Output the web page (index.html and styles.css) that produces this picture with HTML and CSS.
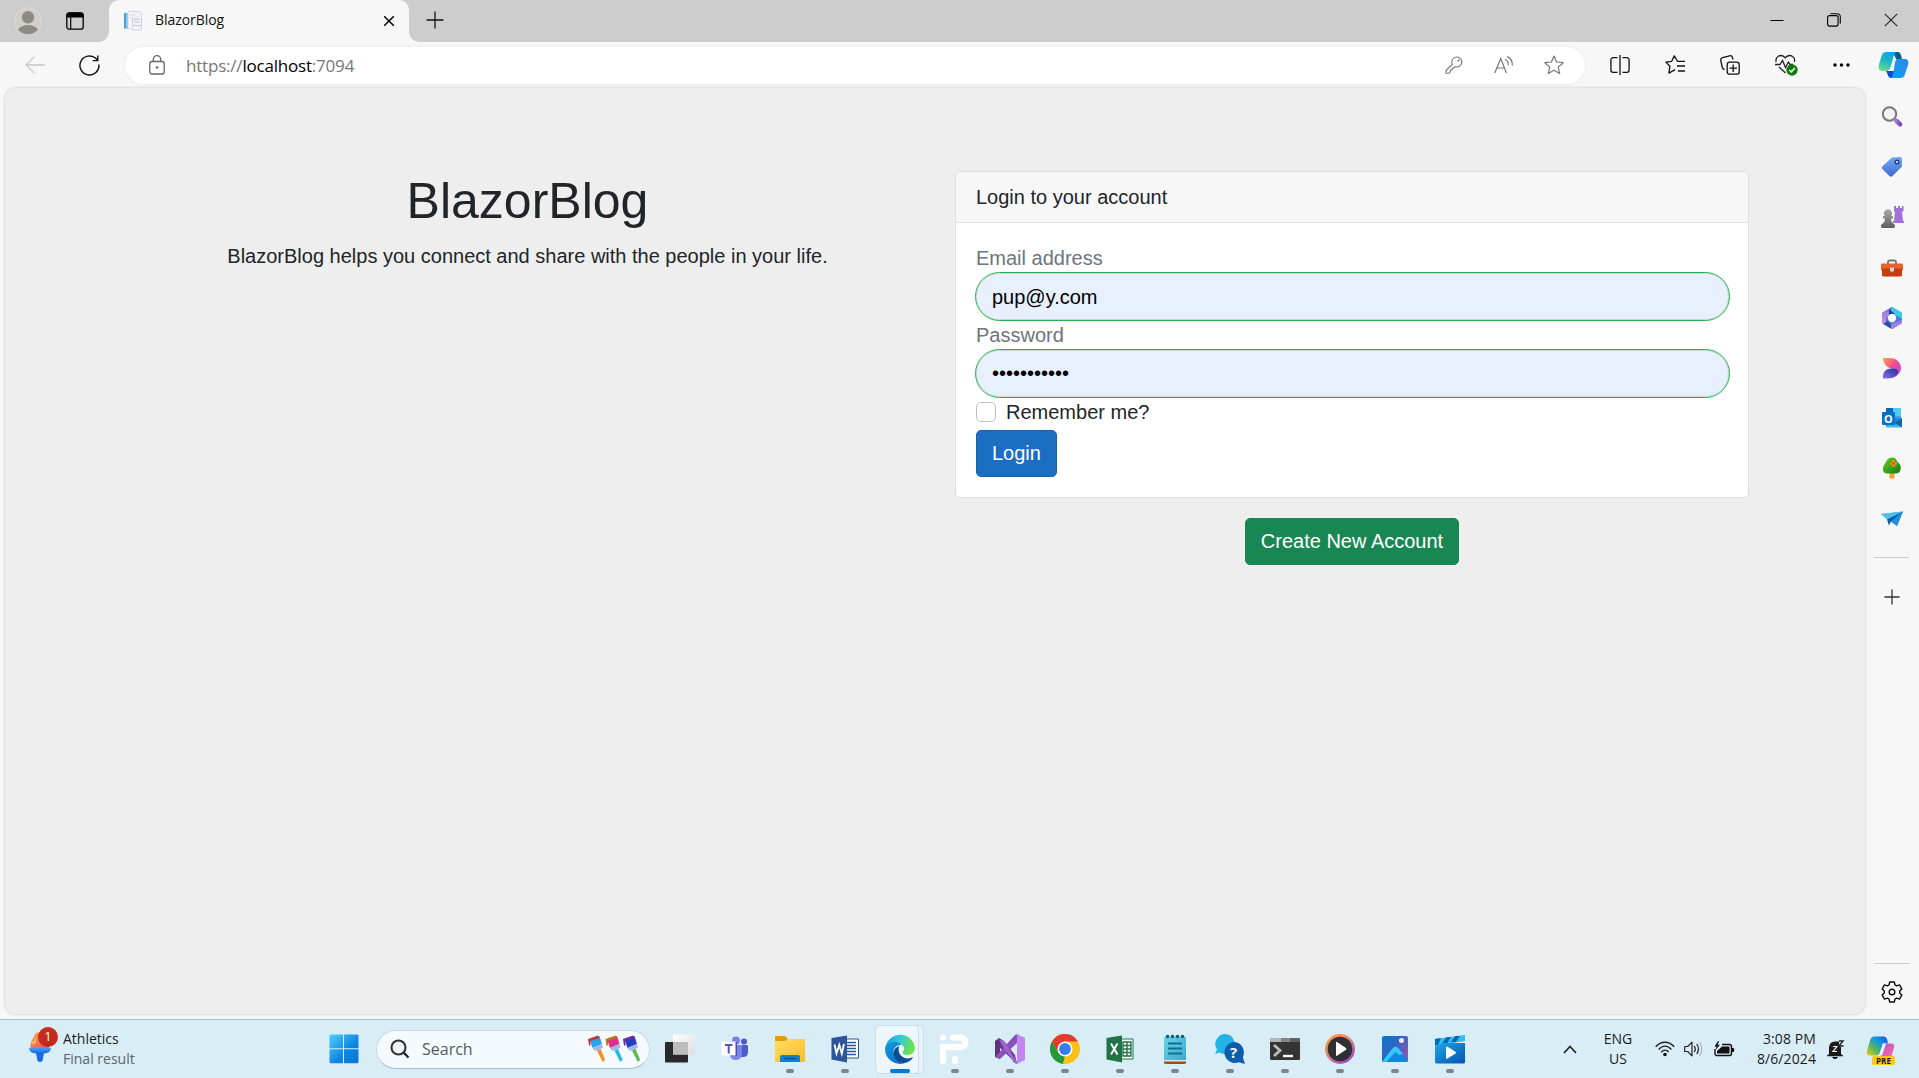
FILE: index.html
```html
<!DOCTYPE html>
<html lang="en">
<head>
<meta charset="utf-8">
<title>BlazorBlog</title>
<link rel="stylesheet" href="styles.css">
</head>
<body>
<div class="screen">
  <header class="tabstrip">
    <div class="tabstrip-left">
      <svg class="avatar" width="28" height="28" viewBox="0 0 28 28"><circle cx="14" cy="14" r="13.3" fill="#d2cfca" stroke="#dedbd7"/><circle cx="14" cy="10.300" r="6.200" fill="#8d8985"/><path d="M4 22.500C6 19.500 10 18 14 18s8 1.500 10 4.500A13 13 0 0 1 4 22.500z" fill="#8d8985"/></svg>
      <svg width="18" height="18" viewBox="0 0 18 18"><rect x=".8" y=".8" width="16.400" height="16.400" rx="2.500" fill="none" stroke="#000" stroke-width="1.300"/><path d="M.5 5.500V3A2.500 2.500 0 0 1 3 .5h12A2.500 2.500 0 0 1 17.500 3v2.500z"/><path d="M4.700 5v12.500" stroke="#000" stroke-width="1.200"/></svg>
    </div>
    <div class="tab">
      <svg width="20" height="20" viewBox="0 0 20 20"><path d="M5 .5h12l1.500 1.500v16H5z" fill="#f4f5f8" stroke="#d5d9df"/><path d="M1 2h3.800v15.500H1z" fill="#4a9fd4"/><path d="M3.300 2h1.500v15.500H3.300z" fill="#a9d4ee"/><path d="M7 4h5M7 7h9" stroke="#d3d8e0"/><path d="M9.500 8.500h9v10.500h-9z" fill="#f1f3f8" stroke="#cfd5df"/><path d="M11 11h6M10 14.500h9" stroke="#c0c8d5"/></svg>
      <span class="tab-title">BlazorBlog</span>
      <svg class="tab-close" width="12" height="12" viewBox="0 0 12 12"><path d="M1.200 1.200l9.600 9.600M10.800 1.200L1.200 10.800" stroke="#000" stroke-width="1.500"/></svg>
    </div>
    <svg class="newtab" width="18" height="18" viewBox="0 0 18 18"><path d="M9 .5v17M.5 9h17" stroke="#111" stroke-width="1.300"/></svg>
    <div class="window-controls">
      <svg width="14" height="14" viewBox="0 0 14 14"><path d="M.5 7.500h13" stroke="#000"/></svg>
      <svg width="14" height="14" viewBox="0 0 14 14"><rect x=".6" y="2.600" width="10.500" height="10.500" rx="2" fill="none" stroke="#000" stroke-width="1.100"/><path d="M3.500.7h6.500a3.300 3.300 0 0 1 3.300 3.300v6.500" fill="none" stroke="#000" stroke-width="1.100"/></svg>
      <svg width="14" height="14" viewBox="0 0 14 14"><path d="M.8.8l12.400 12.400M13.200.8L.8 13.200" stroke="#222" stroke-width="1.100"/></svg>
    </div>
  </header>

  <div class="toolbar">
    <svg class="back" width="20" height="18" viewBox="0 0 20 18"><path d="M20 9H1M9.500.6L1 9l8.500 8.400" fill="none" stroke="#c8c8c8" stroke-width="1.300"/></svg>
    <svg class="reload" width="21" height="21" viewBox="0 0 21 21"><path d="M19.900 9.500A9.500 9.500 0 1 1 17 3.600l1.800 1.900M18.800.6v5h-5.200" fill="none" stroke="#111" stroke-width="1.400"/></svg>
    <div class="address">
      <svg width="16" height="20" viewBox="0 0 16 20"><rect x=".8" y="6.500" width="14.400" height="12.500" rx="2.200" fill="none" stroke="#666" stroke-width="1.300"/><path d="M4.300 6.500V4.300a3.700 3.700 0 0 1 7.400 0v2.200" fill="none" stroke="#666" stroke-width="1.300"/><circle cx="8" cy="12.500" r="1.300" fill="#666"/></svg>
      <span class="url">https://<b>localhost</b>:7094</span>
      <div class="address-actions">
        <svg width="18" height="18" viewBox="0 0 18 18"><path d="M7.300 8.300A5 5 0 0 1 12 1a5 5 0 1 1-1.900 9.700L9 12H7.200v2H5.200v2L4 17.200H1v-2.700z" fill="none" stroke="#777" stroke-width="1.100" stroke-linejoin="round"/><circle cx="13.500" cy="4.500" r="1" fill="#777"/></svg>
        <svg width="20" height="18" viewBox="0 0 20 18"><path d="M.7 17L6.700 2.500 12.500 17M2.800 12h7.800" fill="none" stroke="#777" stroke-width="1.200"/><path d="M11 3.200c2.400 1 3.400 3.200 3.300 6M13 .6c3.700 1.500 5.600 5 5.300 9" fill="none" stroke="#777" stroke-width="1.200"/></svg>
        <svg width="20" height="20" viewBox="0 0 20 20"><path d="M10 1l2.600 6 6.600.7-5 4.400 1.500 6.500L10 15.200l-5.700 3.400 1.500-6.500-5-4.400L7.400 7z" fill="none" stroke="#777" stroke-width="1.200" stroke-linejoin="round"/></svg>
      </div>
    </div>
    <div class="toolbar-actions">
      <svg width="20" height="20" viewBox="0 0 20 20"><path d="M10 0v20M7.500 2.700H3.200A2.300 2.300 0 0 0 .9 5v10a2.300 2.300 0 0 0 2.300 2.300h4.300M12.500 2.700h4.300A2.300 2.300 0 0 1 19.100 5v10a2.300 2.300 0 0 1-2.300 2.300h-4.300" fill="none" stroke="#111" stroke-width="1.300"/></svg>
      <svg width="20" height="20" viewBox="0 0 20 20"><path d="M11.500 4.500L9.300.9 6.700 6.300l-5.800.8 4 4.200-1 6.800 6.300-3.500M11.500 4.500l1 1.800H20M12 11h8M13 16h7" fill="none" stroke="#111" stroke-width="1.300" stroke-linejoin="round"/></svg>
      <svg width="20" height="20" viewBox="0 0 20 20"><rect x="7.200" y="7.200" width="12" height="12" rx="2.500" fill="none" stroke="#111" stroke-width="1.300"/><path d="M13.200 9.500v7.500M9.500 13.200h7.500M4.500 14.500c-1.600-.2-1.900-1-2.200-2L.8 5.500C.5 4 1.200 3 2.500 2.600L9.500.8c1.600-.4 2.500.2 2.900 1.500l.6 2.200" fill="none" stroke="#111" stroke-width="1.300"/></svg>
      <svg width="23" height="22" viewBox="0 0 23 22"><path d="M1.200 8C-.2 3.500 5.200-1.300 10.200 3.800 15.500-1.300 20.800 3.500 19.300 8M0 10.500h5l2.500-4 3 7 3-5.500 1.500 2.500h3M4 13l6.500 6" fill="none" stroke="#222" stroke-width="1.300"/><circle cx="17" cy="16" r="5.700" fill="#107c10"/><path d="M14.500 16l1.800 1.900 3.500-3.800" fill="none" stroke="#fff" stroke-width="1.500"/></svg>
      <svg width="18" height="20" viewBox="0 0 18 20"><circle cx="2" cy="10" r="1.700"/><circle cx="8.500" cy="10" r="1.700"/><circle cx="15" cy="10" r="1.700"/></svg>
    </div>
    <svg class="copilot" width="31" height="28" viewBox="0 0 31 28"><defs><linearGradient id="cpA" x1=".5" y1="0" x2=".1" y2="1"><stop offset="0" stop-color="#0aa5e8"/><stop offset=".45" stop-color="#20b9c1"/><stop offset="1" stop-color="#72e08a"/></linearGradient><linearGradient id="cpB" x1="1" y1="0" x2="0" y2="1"><stop offset="0" stop-color="#2e86e8"/><stop offset="1" stop-color="#0aa4f8"/></linearGradient></defs><path d="M15 1h5c2.500 0 3 3 4 7h-6z" fill="#155a86"/><path d="M8 20h9l-2 7h-2c-3 0-3-4-5-7z" fill="#1448d6"/><path d="M9 1h9c-4 3-3.500 18-9 19H4c-3 0-4-3-3-7L4 4c.7-2 2-3 5-3z" fill="url(#cpA)"/><path d="M19 8h8c3 0 4 2.500 3 6l-3 9c-.8 3-2 4-5 4h-9c4-2 2.500-18 6-19z" fill="url(#cpB)"/></svg>
  </div>

  <div class="workspace">
    <main class="page">
      <div class="page-grid">
        <section class="intro">
          <h1>BlazorBlog</h1>
          <p>BlazorBlog helps you connect and share with the people in your life.</p>
        </section>
        <section class="account">
          <form class="card">
            <div class="card-header">Login to your account</div>
            <div class="card-body">
              <label class="field-label" for="email">Email address</label>
              <input class="field field-email" id="email" type="text" value="pup@y.com">
              <label class="field-label" for="password">Password</label>
              <input class="field" id="password" type="password" value="puppypuppy1">
              <label class="remember"><input class="check" type="checkbox"><span>Remember me?</span></label>
              <button class="btn btn-primary" type="button">Login</button>
            </div>
          </form>
          <button class="btn btn-success" type="button">Create New Account</button>
        </section>
      </div>
    </main>
    <aside class="sidebar">
      <div class="side-item"><svg width="22" height="22" viewBox="0 0 22 22"><defs><linearGradient id="mg" x1="0" x2="1"><stop offset="0" stop-color="#a274d8"/><stop offset="1" stop-color="#7c45bd"/></linearGradient></defs><circle cx="8.500" cy="8" r="6.700" fill="#f3f3f5" stroke="#777" stroke-width="2"/><path d="M13 12.500l3 3" stroke="#888" stroke-width="2"/><path d="M15.500 15l3.500 3.300" stroke="url(#mg)" stroke-width="4.500" stroke-linecap="round"/></svg></div>
      <div class="side-item"><svg width="22" height="22" viewBox="0 0 22 22"><defs><linearGradient id="tg" x1="0" y1="0" x2="0" y2="1"><stop offset="0" stop-color="#76a7f0"/><stop offset="1" stop-color="#3a6cd0"/></linearGradient></defs><path d="M11 1.500L19 1q2 0 2 2v7.500L11.500 20q-1.500 1.500-3 0l-7-6.700q-1.500-1.500 0-3z" fill="url(#tg)"/><circle cx="16" cy="6" r="1.800" fill="#eef" stroke="#1d3f8f" stroke-width="1.500"/></svg></div>
      <div class="side-item"><svg width="24" height="24" viewBox="0 0 24 24"><defs><linearGradient id="pw" x1="0" y1="0" x2="0" y2="1"><stop offset="0" stop-color="#aaa"/><stop offset="1" stop-color="#5f5f5f"/></linearGradient></defs><path d="M14 1h2v2h2V1h2v2h2V1h1.500v5l-1.500 1 1 9h1v2H13v-2h1l1-9-1-1z" fill="#a36fda"/><path d="M5 11a4 4 0 1 1 6 0h2v2.500h-2c.2 3 1 4 3 5.500 1.500 1 1.500 4-.5 4H2.500c-2 0-2-3-.5-4 2-1.500 3-2.500 3-5.500H3V11z" fill="url(#pw)"/></svg></div>
      <div class="side-item"><svg width="22" height="18" viewBox="0 0 22 18"><path d="M7 5V3q0-1.500 1.500-1.500h5Q15 1.500 15 3v2" fill="none" stroke="#777" stroke-width="1.800"/><rect y="4.500" width="22" height="7" rx="1" fill="#e8602c"/><path d="M1 9.500h20V16q0 1.500-1.500 1.500h-17Q1 17.500 1 16z" fill="#c93d0d"/><path d="M9 8.500h4v3l-2 2-2-2z" fill="#ccd3d8"/></svg></div>
      <div class="side-item"><svg width="22" height="22" viewBox="0 0 22 22"><defs><linearGradient id="m3" x1="0" y1="0" x2="0" y2="1"><stop offset="0" stop-color="#8b73d6"/><stop offset="1" stop-color="#d88cf0"/></linearGradient></defs><path d="M10 .5q1-.6 2 0l8 4.700q1 .6 1 1.800v8q0 1.200-1 1.800l-8 4.700q-1 .6-2 0l-8-4.700q-1-.6-1-1.800V7q0-1.200 1-1.800z" fill="#4a7bd0"/><path d="M11 .2q.6 0 1 .3l8 4.700q1 .6 1 1.800v5L14 8H8z" fill="#3bc6ee"/><path d="M11 .2L8 2v6l-3 3v6L2 16.800q-1-.6-1-1.800V7q0-1.200 1-1.800l8-4.700z" fill="url(#m3)"/><path d="M8 2v6l6-1z" fill="#1d3f86"/><path d="M21 13v2q0 1.200-1 1.800l-8 4.700q-1 .6-2 0l-3-2 7-4z" fill="#a57be8"/><path d="M2 16.800l8 4.700V18l-3-4z" fill="#2352a5"/><circle cx="11" cy="11" r="4.200" fill="#f7f7f7"/></svg></div>
      <div class="side-item"><svg width="20" height="22" viewBox="0 0 20 22"><defs><linearGradient id="dsA" x1="0" y1="0" x2="1" y2=".8"><stop offset="0" stop-color="#ffa34b"/><stop offset=".5" stop-color="#f2508b"/><stop offset="1" stop-color="#ba44ec"/></linearGradient><linearGradient id="dsB" x1="1" y1="0" x2="0" y2="1"><stop offset="0" stop-color="#23308d"/><stop offset="1" stop-color="#8670ff"/></linearGradient></defs><path d="M1 1h6c8 0 12 5 12 10 0 4-3 8-8 9.500L12 12C5 11 1 7 1 1z" fill="url(#dsA)"/><path d="M1 21.500V20c0-5 3-8.500 8-8.500 5 0 8 1 7 4-1.500 5-7 6-12 6z" fill="url(#dsB)"/></svg></div>
      <div class="side-item"><svg width="22" height="22" viewBox="0 0 22 22"><path d="M5 1h15v19H5z" fill="#38a9e6"/><path d="M12 1h8v8h-8z" fill="#53c9f3"/><path d="M5 1h7v5H5z" fill="#0d68b8"/><path d="M5 11h15v9H5z" fill="#198bd9"/><path d="M21 11v9H8z" fill="#17679f"/><path d="M5 11l16 9.500H6z" fill="#35b9ef"/><rect x="1" y="5" width="13" height="13" rx="1" fill="#0870ca"/><text class="outlook-letter" x="7.500" y="15.500" text-anchor="middle">O</text></svg></div>
      <div class="side-item"><svg width="20" height="22" viewBox="0 0 20 22"><defs><linearGradient id="tr" x1="0" y1="0" x2="1" y2="1"><stop offset="0" stop-color="#6ad219"/><stop offset="1" stop-color="#11771d"/></linearGradient></defs><path d="M7.500 15h5v6q-2.500 1.500-5 0z" fill="#f0a52a"/><path d="M10 .5c3 0 4.500 1.500 5 4 3 2 4.500 5 3.500 8-.7 2.500-2 4-5 4H5.500C2 16.500.5 14 1 11c.3-3 2-4 3-6 1-3 3-4.500 6-4.500z" fill="url(#tr)"/><circle cx="11.500" cy="4.500" r="1.600" fill="#f28a10"/><circle cx="9.500" cy="6.500" r="1.600" fill="#f28a10"/><circle cx="13.500" cy="6.500" r="1.600" fill="#f28a10"/><circle cx="11.500" cy="8.500" r="1.600" fill="#f28a10"/><circle cx="11.500" cy="6.500" r="1.100" fill="#c8430c"/></svg></div>
      <div class="side-item"><svg width="22" height="18" viewBox="0 0 22 18"><path d="M0 4l22-2.500L16 16z" fill="#20aae9"/><path d="M0 4l22-2.500L7 10z" fill="#4dc0f2"/><path d="M6 9.500l16-8-12 10-2 4z" fill="#0b5d9d"/><path d="M10 11.500L22 1.500 16 16z" fill="#218fdd"/></svg></div>
      <div class="side-rule side-rule-top"></div>
      <svg class="side-plus" width="16" height="16" viewBox="0 0 16 16"><path d="M8 .5v15M.5 8h15" stroke="#333" stroke-width="1.300"/></svg>
      <div class="side-rule side-rule-bottom"></div>
      <svg class="side-gear" width="22" height="22" viewBox="0 0 22 22"><path d="M8.700 1h4.600l.7 2.900 1.600.9 2.900-.9 2.300 4L18.700 10v2l2.100 2.100-2.300 4-2.900-.9-1.600.9-.7 2.900H8.700L8 18.100l-1.600-.9-2.900.9-2.300-4L3.300 12v-2L1.200 7.900l2.300-4 2.900.9L8 3.900z" fill="none" stroke="#111" stroke-width="1.400" stroke-linejoin="round"/><circle cx="11" cy="11" r="2.800" fill="none" stroke="#111" stroke-width="1.400"/></svg>
    </aside>
  </div>

  <footer class="taskbar">
    <div class="widget">
      <div class="widget-icon">
        <svg width="24" height="32" viewBox="0 0 24 32"><defs><linearGradient id="fl" x1="0" y1="0" x2="1" y2="1"><stop offset="0" stop-color="#ffad2e"/><stop offset="1" stop-color="#f03e74"/></linearGradient><linearGradient id="torch" x1="0" y1="0" x2="0" y2="1"><stop offset="0" stop-color="#48a8fb"/><stop offset="1" stop-color="#1468dd"/></linearGradient></defs><path d="M3 18C1 11 5 9 7 3l3-2 11 12v5z" fill="url(#fl)"/><path d="M4 11c2 2 4 0 3-3" stroke="#ffd58a" stroke-width="1.500" fill="none"/><path d="M1 18q0-1.500 1.500-1.500h19q1.500 0 1.500 1.500-1 4-7 4.500h-8Q2 22 1 18z" fill="url(#torch)"/><path d="M8 22h8l-1.500 8q-2.500 2-5 0z" fill="#1a6be2"/></svg>
        <span class="badge">1</span>
      </div>
      <div class="widget-text"><span>Athletics</span><span class="muted">Final result</span></div>
    </div>
    <div class="apps">
      <div class="app"><svg width="30" height="30" viewBox="0 0 30 30"><defs><linearGradient id="wn" x1="0" y1="0" x2="1" y2="1"><stop offset="0" stop-color="#4ed0ff"/><stop offset=".6" stop-color="#0c84df"/><stop offset="1" stop-color="#0878d4"/></linearGradient></defs><path d="M1.500.5H14v13.800H.5V1.500zM15 .5h13.500l1 1v12.800H15zM.5 15.300H14v14H1.500l-1-1zM15 15.300h14.500v13l-1 1H15z" fill="url(#wn)"/></svg></div>
      <div class="search">
        <svg width="20" height="20" viewBox="0 0 20 20"><circle cx="8.500" cy="8.500" r="7" fill="#f2f4f5" stroke="#333" stroke-width="2.100"/><path d="M13.500 13.500l5 5" stroke="#222" stroke-width="2.300"/></svg>
        <span class="search-text">Search</span>
        <svg class="brushes" width="52" height="28" viewBox="0 0 52 28"><defs><path id="bristle" d="M1.500 4l10-3 2.500 8-9.500 4z"/><path id="paint" d="M0 4l10-3.500 1.500 2.500L2.500 6v4.500H1z"/><path id="ferrule" d="M4.500 13L14 9l1 3.500-3 2-5 1.500z"/><path id="handle" d="M9 15.500l3.500-1.500 4.500 10.500q-.5 2.500-2.500 2z"/></defs>
          <g><use href="#bristle" fill="#2ba5ea"/><use href="#paint" fill="#c33a30"/><use href="#ferrule" fill="#a8b5ed"/><use href="#handle" fill="#f58b28"/></g>
          <g transform="translate(17.500)"><use href="#bristle" fill="#e22d8c"/><use href="#paint" fill="#b87a12"/><use href="#ferrule" fill="#a8b5ed"/><use href="#handle" fill="#25b8ed"/></g>
          <g transform="translate(35)"><use href="#bristle" fill="#253fc4"/><use href="#paint" fill="#6d2aa4"/><use href="#ferrule" fill="#a8b5ed"/><use href="#handle" fill="#5cbb51"/></g></svg>
      </div>
      <div class="app"><svg width="30" height="30" viewBox="0 0 30 30"><defs><linearGradient id="tv" x1="0" y1="0" x2="1" y2="1"><stop offset="0" stop-color="#fff"/><stop offset="1" stop-color="#ddd"/></linearGradient></defs><rect y="8" width="23" height="20.500" rx="1" fill="#292929"/><rect x="8" y=".5" width="22" height="20" rx="1" fill="url(#tv)"/><path d="M8 8h15v12.500H8z" fill="#bdbdbd"/></svg></div>
      <div class="app"><svg width="28" height="26" viewBox="0 0 28 26"><circle cx="15" cy="4.500" r="4" fill="#7b83eb"/><circle cx="23" cy="5.500" r="3" fill="#5059c9"/><path d="M17 9h9q1 0 1 1v6q0 5-5 5h-3z" fill="#5059c9"/><path d="M9 9h12v8q0 7-6 7t-6-6z" fill="#7b83eb"/><path d="M9 6h7v14H9z" fill="#4b53a5"/><rect x=".5" y="5.500" width="14" height="14" fill="#fff"/><path d="M4 9h7.500M7.700 9v8.500" stroke="#5157b5" stroke-width="2"/></svg></div>
      <div class="app running"><svg width="30" height="28" viewBox="0 0 30 28"><defs><linearGradient id="fo" x1="0" y1="0" x2="1" y2="1"><stop offset="0" stop-color="#ffdd63"/><stop offset="1" stop-color="#f9bd23"/></linearGradient></defs><path d="M0 2q0-1 1-1h9l3 3-2 3H0z" fill="#dda000"/><path d="M0 6h10l3-2h17v22q0 1-1 1H1q-1 0-1-1z" fill="url(#fo)"/><path d="M5 27v-5q0-2 2-2h16q2 0 2 2v5z" fill="#137fce"/><path d="M9 23.500h12" stroke="#07558f" stroke-width="1.500"/></svg></div>
      <div class="app running"><svg width="28" height="28" viewBox="0 0 28 28"><path d="M15 4h12.500v19H15z" fill="#fff" stroke="#2b579a"/><path d="M16 7.500h9M16 10.500h9M16 13.500h9M16 16.500h9M16 19.500h9" stroke="#2b579a" stroke-width="1.300"/><path d="M.5 3L16 .5v27L.5 24.500z" fill="#2b579a"/><path d="M3.500 9.500l2 9L8.300 10l2.500 8.500 2.200-9.500" fill="none" stroke="#fff" stroke-width="1.900"/></svg></div>
      <div class="app active"><svg width="30" height="30" viewBox="0 0 30 30"><defs><linearGradient id="ed" x1="0" y1="0" x2="1" y2=".3"><stop offset="0" stop-color="#159bdb"/><stop offset=".5" stop-color="#34c8dc"/><stop offset="1" stop-color="#6de24b"/></linearGradient><linearGradient id="eb" x1="0" y1="0" x2=".6" y2="1"><stop offset="0" stop-color="#1598d9"/><stop offset="1" stop-color="#0877d0"/></linearGradient></defs><path d="M1 11A15 15 0 0 1 30 13c0 5-3 8-8 8-4 0-5-2-4-3 2-3 1-7-3-8-5-2-10 0-14 5z" fill="url(#ed)"/><path d="M.2 13c3-6 13-7 16-2-4-.5-8 3-8 8 0 7 7 11 14 9A15 15 0 0 1 .2 13z" fill="url(#eb)"/><path d="M14 12c-5 2-7 7-5 11 3 6 9 7 14 5 3-1.500 4-3 5-5-3 2-8 2-11-.5-3-2.500-4-5-3-10.500z" fill="#0d4e92"/></svg></div>
      <div class="app running"><svg width="30" height="31" viewBox="0 0 30 31"><g fill="none" stroke="#fff" stroke-width="6" stroke-linecap="round"><path d="M3 27V13h19a5 5 0 0 0 0-9.500H13"/><path d="M15 25v2"/></g><circle cx="3" cy="3.500" r="3" fill="#fff"/></svg></div>
      <div class="app running"><svg width="30" height="30" viewBox="0 0 30 30"><path d="M0 7l4-3 5 3 11 14 2 9L5 14v8l-5 1z" fill="#6d3a94"/><path d="M0 7l5-2v20l-5-2z" fill="#5c317f"/><path d="M5 25l-5-2L20 1l3-1v8z" fill="#8a51b6"/><path d="M4 6l5 1 14 23-4-1z" fill="#9f67cd"/><path d="M22 0l8 4v22l-8 4z" fill="#c186f2"/></svg></div>
      <div class="app running"><svg width="30" height="30" viewBox="0 0 30 30"><circle cx="15" cy="15" r="15" fill="#fbc116"/><path d="M2 7.500A15 15 0 0 1 28 7.500H15L8.500 18.700z" fill="#e33b2e"/><path d="M2 7.500L8.500 18.700 15 22.500l-2 7.400A15 15 0 0 1 2 7.500z" fill="#24983e"/><path d="M15 22.500L21.500 18l-6.500 12h-2z" fill="#fbc116"/><circle cx="15" cy="15" r="7.500" fill="#fff"/><circle cx="15" cy="15" r="5.900" fill="#357de8"/></svg></div>
      <div class="app running"><svg width="28" height="28" viewBox="0 0 28 28"><path d="M14 4h13v20H14z" fill="#fff" stroke="#217346"/><path d="M17 7h8v14h-8zM17 10.500h8M17 14h8M17 17.500h8M21 7v14" fill="none" stroke="#217346" stroke-width="1.400"/><path d="M.5 3L16 .5v27L.5 24.500z" fill="#217346"/><path d="M5 8.500l6.500 11M11.500 8.500L5 19.500" stroke="#fff" stroke-width="2"/></svg></div>
      <div class="app running"><svg width="22" height="30" viewBox="0 0 22 30"><defs><linearGradient id="np" x1="0" y1="0" x2="1" y2="1"><stop offset="0" stop-color="#69d3e8"/><stop offset="1" stop-color="#3fa8cc"/></linearGradient></defs><rect y="3" width="22" height="24" rx="1" fill="url(#np)"/><path d="M0 26h22v1.800H0z" fill="#e6e6e6"/><path d="M0 27.500h22v1q0 1.500-2 1.500H2q-2 0-2-1.500z" fill="#9a5010"/><path d="M4 9.500h14M4 14.500h14M4 19.500h14" stroke="#087391" stroke-width="1.900"/><g fill="#07617d"><circle cx="3.500" cy="2.500" r="1.800"/><circle cx="8.500" cy="2.500" r="1.800"/><circle cx="13.500" cy="2.500" r="1.800"/><circle cx="18.500" cy="2.500" r="1.800"/></g></svg></div>
      <div class="app running"><svg width="30" height="30" viewBox="0 0 30 30"><path d="M10.500 0a10 10 0 1 1-6 18.500L0 20l2-4.500A10 10 0 0 1 10.500 0z" fill="#25b3e7"/><path d="M18.500 8a10.500 10.500 0 0 1 9.300 15.300L30 30l-6.300-1.800A10.500 10.500 0 1 1 18.500 8z" fill="#0d5dad"/><text class="help-mark" x="18.500" y="24" text-anchor="middle">?</text></svg></div>
      <div class="app running"><svg width="30" height="24" viewBox="0 0 30 24"><rect y="1" width="30" height="22" rx="1.500" fill="#343434"/><path d="M1 1h10v4H0V2z" fill="#b5b5b5"/><path d="M11 1h9v4h-9z" fill="#858585"/><path d="M20 1h9l1 1v3H20z" fill="#616161"/><path d="M4 8l6 5.500L4 19" fill="none" stroke="#bdbdbd" stroke-width="2.800"/><path d="M13 19h10" stroke="#fff" stroke-width="2.400"/></svg></div>
      <div class="app running"><svg width="30" height="30" viewBox="0 0 30 30"><defs><linearGradient id="mp" x1="0" y1="0" x2=".7" y2="1"><stop offset="0" stop-color="#ff9b38"/><stop offset=".5" stop-color="#df8479"/><stop offset="1" stop-color="#9a4bc4"/></linearGradient></defs><circle cx="15" cy="15" r="15" fill="url(#mp)"/><circle cx="15" cy="15" r="12.300" fill="#303033"/><path d="M11 8.500q0-1 1-.5l9 6q1 1 0 1.800l-9 6q-1 .5-1-.6z" fill="#fff"/></svg></div>
      <div class="app running"><svg width="26" height="26" viewBox="0 0 26 26"><defs><linearGradient id="ph" x1="0" y1="0" x2="1" y2=".7"><stop offset="0" stop-color="#0875d1"/><stop offset=".5" stop-color="#3067c1"/><stop offset="1" stop-color="#9155b8"/></linearGradient></defs><rect width="26" height="26" rx="2" fill="url(#ph)"/><path d="M1 24l10-12q2.500-3 5 0l10 12q0 2-2 2H2q-1 0-1-2z" fill="#1387dc"/><path d="M1 25l9.500-12.500q3-3.500 6.500.5l4 5-4 1-3.500-3L4 26z" fill="#37c9fb"/><circle cx="19.500" cy="4.500" r="2.500" fill="#e8edff"/></svg></div>
      <div class="app running"><svg width="30" height="30" viewBox="0 0 30 30"><defs><linearGradient id="mv" x1="0" y1="0" x2="1" y2="1"><stop offset="0" stop-color="#20a6e8"/><stop offset="1" stop-color="#0651b3"/></linearGradient></defs><path d="M0 5l30-4v6L0 12z" fill="#32bdf0"/><path d="M0 5l6-1-3 7H0zM11 3.500l5-.7-4 6.700H7zM20 2.300l5-.6-4 6.300h-5z" fill="#0965b8"/><path d="M0 12l8-3h22v19q0 1.500-1.500 1.500h-27Q0 29.500 0 28z" fill="url(#mv)"/><path d="M11 13.500q0-1.500 1.500-.8l8 5q1 1 0 1.800l-8 5q-1.500.7-1.500-.8z" fill="#fff"/></svg></div>
    </div>
    <div class="tray">
      <svg class="chevron" width="14" height="9" viewBox="0 0 14 9"><path d="M1 8l6-6.500L13 8" fill="none" stroke="#222" stroke-width="1.700"/></svg>
      <div class="lang"><span>ENG</span><span>US</span></div>
      <svg class="wifi" width="20" height="16" viewBox="0 0 20 16"><path d="M.7 5.800C6-.3 14-.3 19.300 5.800M3.600 8.500c4-4.500 9-4.500 12.800 0M6.200 11.200c2.500-2.800 5.200-2.800 7.600 0" fill="none" stroke="#222" stroke-width="1.300"/><circle cx="10" cy="13.500" r="1.800" fill="#111"/></svg>
      <svg class="volume" width="20" height="16" viewBox="0 0 20 16"><path d="M.7 5.500h3L8 1.200v13.600l-4.300-4.300h-3z" fill="none" stroke="#222" stroke-width="1.200" stroke-linejoin="round"/><path d="M10.300 5q2 3 0 6M12.800 3q3.300 5 0 10" fill="none" stroke="#222" stroke-width="1.200"/><path d="M15.500 1q4.500 7 0 14" fill="none" stroke="#a9bac2" stroke-width="1.200"/></svg>
      <svg class="battery" width="21" height="16" viewBox="0 0 21 16"><path d="M8 3.500h7.500q2 0 2 2v7q0 2-2 2H3q-2 0-2-2V8" fill="none" stroke="#111" stroke-width="1.400"/><path d="M8 5.500H15.500v7H3V10z" fill="#111"/><path d="M4 0L.5 5.500h2L1.500 9 6 3.800H3.700L5 0z" fill="#111"/><path d="M18 7h1q1.300 0 1.300 2T19 11h-1z"/></svg>
      <div class="clock"><span>3:08 PM</span><span>8/6/2024</span></div>
      <svg class="bell" width="18" height="19" viewBox="0 0 18 19"><path d="M2 14V7.500Q2.500 1.500 8 1.500h4v3l2 3V14l2 1.500v.7H0v-.7z" fill="#1b1b1b"/><path d="M5 17h6q-1 2-3 2t-3-2z"/><path d="M6 6.500h4l-4 5h4" stroke="#fff" stroke-width="1.200" fill="none"/><path d="M12 1h4l-4 5h4.500" stroke="#222" stroke-width="1.400" fill="none"/></svg>
      <div class="pre-copilot">
        <svg width="30" height="26" viewBox="0 0 30 26"><defs><linearGradient id="pc" x1="1" y1="0" x2="0" y2="1"><stop offset="0" stop-color="#1750d3"/><stop offset=".35" stop-color="#0e99e8"/><stop offset=".65" stop-color="#5ab65a"/><stop offset="1" stop-color="#f3cd13"/></linearGradient><linearGradient id="pd" x1="0" y1="0" x2="1" y2="1"><stop offset="0" stop-color="#b44ce9"/><stop offset="1" stop-color="#ff6e8b"/></linearGradient></defs><path d="M9 .5h9q3 0 4 7h-5l-3 9q-1 3-4 3H4q-4 0-3-5l3-10Q5 .5 9 .5z" fill="url(#pc)"/><path d="M19 7.500h6q4 0 3 4l-3 10H12q2-1 3-5z" fill="url(#pd)"/><path d="M17 7.500h3l-4 12h-3z" fill="#e8f5ff"/></svg>
        <span class="pre">PRE</span>
      </div>
    </div>
  </footer>
</div>
</body>
</html>
```
FILE: styles.css
```css
* { box-sizing: border-box; }
body { margin: 0; font-family: "Open Sans", "Noto Sans", sans-serif; }
svg { display: block; flex: none; }
.screen { width: 1919px; height: 1078px; display: flex; flex-direction: column; overflow: hidden; background: #f7f7f7; }

/* Browser tabs */
.tabstrip { height: 42px; flex: none; display: flex; background: #cdcdcd; }
.tabstrip-left { width: 109px; display: flex; align-items: center; gap: 24px; padding: 0 0 1px 14px; }
.tab { position: relative; width: 300px; display: flex; align-items: center; padding: 0 14px; background: #f7f7f7; border-radius: 10px 10px 0 0; }
.tab::before, .tab::after { content: ""; position: absolute; bottom: 0; width: 10px; height: 10px; }
.tab::before { left: -10px; background: radial-gradient(circle at 0 0, #cdcdcd 9.5px, #f7f7f7 10px); }
.tab::after { right: -10px; background: radial-gradient(circle at 100% 0, #cdcdcd 9.5px, #f7f7f7 10px); }
.tab-title { margin: -3px 0 0 12px; font-size: 14px; letter-spacing: -.05px; color: #111; }
.tab-close { margin-left: auto; }
.newtab { margin: 11px 0 0 17px; }
.window-controls { margin-left: auto; display: flex; gap: 43px; padding: 13px 21px 0 0; }

/* Address bar row */
.toolbar { height: 46px; flex: none; display: flex; align-items: center; }
.back { margin-left: 25px; }
.reload { margin-left: 34px; }
.address { width: 1460px; height: 37px; margin-left: 25px; display: flex; align-items: center; padding: 0 21px 0 24px; background: #fff; border-radius: 19px; box-shadow: 0 0 4px rgba(0,0,0,.07); }
.url { margin-left: 21px; font-size: 17px; letter-spacing: -.2px; color: #777; }
.url b { font-weight: 400; color: #000; }
.address-actions { margin-left: auto; display: flex; align-items: center; gap: 30.5px; }
.toolbar-actions { display: flex; align-items: center; gap: 35px; margin-left: 25px; }
.copilot { margin-left: 27px; }

/* Browser content and edge bar */
.workspace { flex: 1; display: flex; padding-left: 5px; }
.page { width: 1860px; height: 926px; background: #eee; border-radius: 11px; box-shadow: 0 0 3px rgba(0,0,0,.22); font-family: "Liberation Sans", Arial, sans-serif; font-size: 20px; line-height: 30px; color: #212529; }
.page-grid { display: grid; grid-template-columns: 793px 794px; column-gap: 31px; padding: 83px 0 0 126px; }
.intro { text-align: center; }
.intro h1 { margin: 0 0 10px; font-size: 50px; line-height: 60px; font-weight: 400; }
.intro p { margin: 0; }
.account { display: flex; flex-direction: column; align-items: center; gap: 20px; }
.card { width: 100%; background: #fff; border: 1px solid #dfdfdf; border-radius: 5px; overflow: hidden; }
.card-header { padding: 10px 20px; background: #f7f7f7; border-bottom: 1px solid #dfdfdf; }
.card-body { display: flex; flex-direction: column; align-items: flex-start; padding: 20px 19px 20px 20px; }
.field-label { color: #6c757d; }
.field { width: 100%; height: 47px; padding: 0 15px; font: inherit; color: #000; background: #e8f0fe; border: 1px solid #ced4da; outline: 1px solid #26b050; border-radius: 24px; }
.field-email { padding-top: 1px; }
.remember { display: flex; align-items: center; gap: 10px; height: 33px; padding-bottom: 3px; }
.check { appearance: none; width: 20px; height: 20px; margin: 0; background: #fff; border: 1px solid #bfbfbf; border-radius: 5px; }
.btn { height: 47px; padding: 0 15px 2px; font: inherit; color: #fff; border: 1px solid; border-radius: 5px; }
.btn-primary { background: #1b6ec2; border-color: #1861ac; }
.btn-success { background: #198754; border-color: #198754; }

.sidebar { width: 53px; display: flex; flex-direction: column; align-items: center; padding-top: 4px; }
.side-item { height: 50.2px; flex: none; display: flex; align-items: center; justify-content: center; }
.side-rule { width: 35px; height: 1px; flex: none; background: #ccc; }
.side-rule-top { margin-top: 13px; }
.side-plus { margin-top: 31px; }
.side-rule-bottom { margin-top: auto; }
.side-gear { margin: 17px 0 16px; }
.outlook-letter { font: 700 11px "Open Sans", sans-serif; fill: #fff; }
.help-mark { font: 700 15px "Open Sans", sans-serif; fill: #fff; }

/* Taskbar */
.taskbar { height: 59px; flex: none; display: flex; background: #d9edf7; border-top: 1px solid #a9b9c3; color: #1b1b1b; font-size: 14px; line-height: 20px; }
.widget { width: 316px; display: flex; align-items: flex-start; padding: 7px 0 0 28px; }
.widget-icon { position: relative; padding-top: 4px; }
.badge { position: absolute; left: 10px; top: 0; width: 20px; height: 20px; border-radius: 50%; background: #c42b1c; color: #fff; font-size: 13px; line-height: 19px; text-align: center; }
.widget-text { display: flex; flex-direction: column; margin: 2px 0 0 11px; }
.muted { color: #5b666c; }
.apps { display: flex; align-items: center; }
.app { position: relative; width: 55px; height: 49px; display: flex; align-items: center; justify-content: center; }
.running::after, .active::after { content: ""; position: absolute; left: 50%; bottom: 1px; width: 8px; height: 4px; margin-left: -4px; border-radius: 2px; background: #7b868b; }
.active::before { content: ""; position: absolute; inset: 0 8px 0 3px; border: 1px solid #c9dde6; border-radius: 5px; background: #edf6fb; box-shadow: 5px 0 0 -1px #e7f3f9, 5px 0 0 0 #c9dde6; }
.active svg { position: relative; }
.active::after { width: 20px; margin-left: -10px; background: #0078d4; }
.search { width: 274px; height: 39px; margin: 0 2px 0 5px; display: flex; align-items: center; padding: 0 9px 0 13px; border: 1px solid #c9dce5; border-bottom-color: #abbdc6; border-radius: 20px; background: #f4fafd; }
.search-text { margin-left: 12px; font-size: 16px; color: #555c60; }
.brushes { margin-left: auto; }
.tray { margin-left: auto; display: flex; align-items: center; padding-right: 23px; }
.lang, .clock { display: flex; flex-direction: column; }
.lang { width: 40px; margin-left: 21px; text-align: center; }
.wifi { margin-left: 17px; }
.volume { margin-left: 9px; }
.battery { margin-left: 10px; }
.clock { width: 76px; margin-left: 5px; text-align: right; letter-spacing: .1px; }
.bell { margin-left: 11px; }
.pre-copilot { position: relative; margin-left: 21px; width: 30px; }
.pre { position: absolute; left: 6px; bottom: -3px; width: 23px; height: 9px; border-radius: 2px; background: #ffc819; font-size: 8px; font-weight: 700; line-height: 9px; text-align: center; }
```
